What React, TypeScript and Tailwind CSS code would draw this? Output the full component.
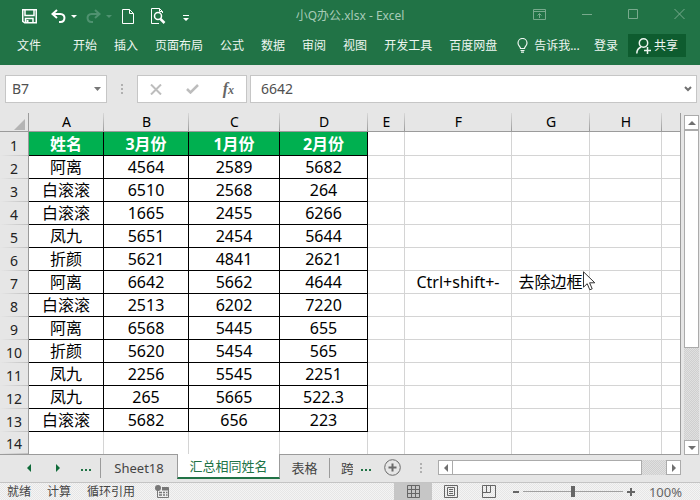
import React, { useState } from "react";

type Row = [string, string, string, string];

const rows: Row[] = [
  ["阿离", "4564", "2589", "5682"],
  ["白滚滚", "6510", "2568", "264"],
  ["白滚滚", "1665", "2455", "6266"],
  ["凤九", "5651", "2454", "5644"],
  ["折颜", "5621", "4841", "2621"],
  ["阿离", "6642", "5662", "4644"],
  ["白滚滚", "2513", "6202", "7220"],
  ["阿离", "6568", "5445", "655"],
  ["折颜", "5620", "5454", "565"],
  ["凤九", "2256", "5545", "2251"],
  ["凤九", "265", "5665", "522.3"],
  ["白滚滚", "5682", "656", "223"],
];

const columns = [
  { name: "A", width: "w-[75px]" },
  { name: "B", width: "w-[85px]" },
  { name: "C", width: "w-[91px]" },
  { name: "D", width: "w-[88px]" },
  { name: "E", width: "w-[37px]" },
  { name: "F", width: "w-[107px]" },
  { name: "G", width: "w-[78px]" },
  { name: "H", width: "w-[72px]" },
];

const ribbonTabs = ["开始", "插入", "页面布局", "公式", "数据", "审阅", "视图", "开发工具", "百度网盘"];

function TitleBar() {
  return (
    <div className="flex h-8 items-center">
      <div className="flex flex-1 items-center text-white">
        <button aria-label="保存" className="mr-[14px] ml-[22px]">
          <svg width="15" height="15" viewBox="0 0 15 15" fill="none" stroke="currentColor" strokeWidth="1.5">
            <path d="M.75.75h13.500v13H2.750l-2-1.500z" />
            <path d="M3 1v5.500h9V1" />
            <path d="M3.500 14V9.500h7.500V14" />
            <path d="M4.500 11h2v3h-2z" fill="currentColor" stroke="none" />
          </svg>
        </button>
        <button aria-label="撤消" className="mr-[5px]">
          <svg width="15" height="14" viewBox="0 0 15 14" fill="none" stroke="currentColor" strokeWidth="2">
            <path d="M6 1 1.500 5 6 9M2 5h7.500c5.500 0 5 8 0 8H8" />
          </svg>
        </button>
        <Caret />
        <button aria-label="恢复" className="mr-[5px] ml-[9px] text-[#4f9270]">
          <svg width="15" height="14" viewBox="0 0 15 14" fill="none" stroke="currentColor" strokeWidth="2">
            <path d="M9 1l4.500 4L9 9M13 5H5.500C0 5 .5 13 5.500 13H7" />
          </svg>
        </button>
        <span className="flex text-[#4f9270]"><Caret /></span>
        <button aria-label="新建" className="mr-[17px] ml-[10px]">
          <svg width="12" height="15" viewBox="0 0 12 15" fill="none" stroke="currentColor">
            <path d="M.5.5h7l4 4v10H.5z" />
            <path d="M7.500.5v4h4" />
          </svg>
        </button>
        <button aria-label="打印预览" className="mr-[17px]">
          <svg width="15" height="17" viewBox="0 0 15 17" fill="none" stroke="currentColor">
            <path d="M8 15.500H.5V.5h8l3 3V5M8.500.5v3h3" />
            <circle cx="7" cy="8" r="3.500" strokeWidth="1.500" />
            <path d="m9.500 11 4 4" strokeWidth="2.500" />
          </svg>
        </button>
        <button aria-label="自定义快速访问工具栏">
          <svg width="6" height="6" viewBox="0 0 6 6" fill="currentColor" className="mt-[3px]">
            <path d="M0 0h6v1H0zM0 3h6L3 6z" />
          </svg>
        </button>
      </div>
      <h1 className="text-xs leading-4 text-[#a7cbb7]">小Q办公.xlsx - Excel</h1>
      <div className="flex flex-1 items-center justify-end gap-9 pb-1 text-[#78aa8d]">
        <button aria-label="功能区显示选项">
          <svg width="13" height="11" viewBox="0 0 13 11" fill="none" stroke="currentColor">
            <path d="M.5.5h12v10H.5zM.5 2.500h12M6.500 9V4.500M4.500 6.500l2-2 2 2" />
          </svg>
        </button>
        <button aria-label="最小化">
          <svg width="10" height="10" viewBox="0 0 10 10" stroke="currentColor">
            <path d="M0 5.500h10" />
          </svg>
        </button>
        <button aria-label="最大化">
          <svg width="10" height="10" viewBox="0 0 10 10" fill="none" stroke="currentColor">
            <path d="M.5.5h9v9h-9z" />
          </svg>
        </button>
        <button aria-label="关闭" className="mr-[15px]">
          <svg width="11" height="10" viewBox="0 0 11 10" stroke="currentColor">
            <path d="M.5 0l10 10M10.500 0l-10 10" />
          </svg>
        </button>
      </div>
    </div>
  );
}

function Caret() {
  return (
    <svg width="6" height="3" viewBox="0 0 6 3" fill="currentColor">
      <path d="M0 0h6L3 3z" />
    </svg>
  );
}

function Ribbon() {
  return (
    <nav className="flex h-[33px] items-center pr-[14px] pb-[6px] pl-[17px] text-xs leading-4 whitespace-nowrap text-[#eef6f1]">
      <button className="mr-8">文件</button>
      <div className="flex gap-[17px]">
        {ribbonTabs.map((tab) => (
          <button key={tab}>{tab}</button>
        ))}
      </div>
      <button className="ml-5 flex items-center gap-[6px]">
        <svg width="11" height="15" viewBox="0 0 11 15" fill="none" stroke="currentColor" strokeWidth="1.200">
          <path d="M3.500 10.500c0-2-2.500-2.500-2.500-5.500a4.500 4.500 0 0 1 9 0c0 3-2.500 3.500-2.500 5.500zM3.500 12.500h4M4 14.200h3" />
        </svg>
        告诉我...
      </button>
      <button className="ml-auto">登录</button>
      <button className="ml-[10px] flex h-[23px] items-center gap-[3px] bg-[#0e5c2f] px-2">
        <svg width="15" height="16" viewBox="0 0 15 16" fill="none" stroke="currentColor" strokeWidth="1.500">
          <circle cx="7.500" cy="5" r="4.200" />
          <path d="M.8 15.500c0-4 2-5.500 4.200-6.500M11.500 9v7M8 12.500h7" />
        </svg>
        共享
      </button>
    </nav>
  );
}

function Dots() {
  return (
    <span className="flex flex-col gap-[2px]" aria-hidden="true">
      <i className="size-[2px] bg-[#b0b0b0]" />
      <i className="size-[2px] bg-[#b0b0b0]" />
      <i className="size-[2px] bg-[#b0b0b0]" />
    </span>
  );
}

function FormulaBar() {
  const [cell, setCell] = useState("B7");
  const [formula, setFormula] = useState("6642");
  return (
    <div className="flex items-center pt-[10px] pr-[3px] pb-[10px] pl-[5px] text-sm text-[#505050]">
      <div className="flex h-7 w-[102px] items-center border border-[#c6c6c6] bg-white pr-[5px] pl-[6px]">
        <input
          aria-label="名称框"
          value={cell}
          onChange={(e) => setCell(e.target.value)}
          className="w-full min-w-0 flex-1 outline-none"
        />
        <button aria-label="名称列表" className="text-[#777]">
          <svg width="7" height="4" viewBox="0 0 7 4" fill="currentColor">
            <path d="M0 0h7L3.500 4z" />
          </svg>
        </button>
      </div>
      <div className="flex w-[30px] justify-center"><Dots /></div>
      <div className="flex h-7 w-[110px] items-center justify-between border border-[#c6c6c6] bg-white pr-3 pl-3">
        <button aria-label="取消" className="text-[#bdbdbd]">
          <svg width="12" height="11" viewBox="0 0 12 11" stroke="currentColor" strokeWidth="2">
            <path d="M1 .5l10 10M11 .5l-10 10" />
          </svg>
        </button>
        <button aria-label="输入" className="text-[#bdbdbd]">
          <svg width="13" height="10" viewBox="0 0 13 10" fill="none" stroke="currentColor" strokeWidth="2.500">
            <path d="M1 5l3.500 3.500L12 1" />
          </svg>
        </button>
        <button aria-label="插入函数" className="font-['Liberation_Serif',serif] text-base leading-4 font-bold text-[#666] italic">
          f<span className="text-xs">x</span>
        </button>
      </div>
      <div className="ml-[3px] flex h-7 flex-1 items-center border border-[#c6c6c6] bg-white pr-1 pl-[10px]">
        <input
          aria-label="编辑栏"
          value={formula}
          onChange={(e) => setFormula(e.target.value)}
          className="w-full min-w-0 flex-1 outline-none"
        />
        <button aria-label="展开编辑栏" className="text-[#707070]">
          <svg width="8" height="6" viewBox="0 0 8 6" fill="none" stroke="currentColor" strokeWidth="2">
            <path d="M1 1l3 3 3-3" />
          </svg>
        </button>
      </div>
    </div>
  );
}

const rowHeader =
  "border-r border-[#9b9b9b] bg-[#e6e6e6] bg-[linear-gradient(to_right,#e6e6e6,#c0c0c0)] bg-[length:100%_1px] bg-bottom bg-no-repeat px-0 pb-0 text-sm leading-[20px] font-normal text-[#222]";
const plainCell = "border-r border-b border-[#d4d4d4] p-0 whitespace-nowrap";
const dataCell = "border-r border-b border-black p-0 whitespace-nowrap";
const headCell = "h-6 border-r border-b border-black bg-[#00b050] p-0 font-bold text-white";

function Grid() {
  return (
    <table className="w-full table-fixed border-separate border-spacing-0 border-r border-[#9b9b9b] bg-white text-center text-base leading-[22px] text-black">
      <colgroup>
        <col className="w-[29px]" />
        {columns.map((c) => (
          <col key={c.name} className={c.width} />
        ))}
        <col />
      </colgroup>
      <thead>
        <tr className="bg-[#e6e6e6] text-sm leading-[18px]">
          <td className="border-r border-b border-[#9b9b9b] p-0">
            <svg width="11" height="11" viewBox="0 0 11 11" className="mt-1 mr-[3px] ml-auto">
              <path d="M11 0v11H0z" fill="#b4b4b4" />
            </svg>
          </td>
          {columns.map((c) => (
            <th
              key={c.name}
              scope="col"
              className="border-b border-[#9b9b9b] bg-[linear-gradient(to_bottom,#d8d8d8,#9b9b9b)] bg-[length:1px_100%] bg-right bg-no-repeat p-0 font-normal"
            >
              {c.name}
            </th>
          ))}
          <th className="border-b border-[#9b9b9b] p-0" />
        </tr>
      </thead>
      <tbody>
        <tr>
          <th scope="row" className={`${rowHeader} pt-[3px]`}>1</th>
          {["姓名", "3月份", "1月份", "2月份"].map((label) => (
            <td key={label} className={headCell}>{label}</td>
          ))}
          <td className={plainCell} />
          <td className={plainCell} />
          <td className={plainCell} />
          <td className={plainCell} />
          <td className="border-b border-[#d4d4d4] p-0" />
        </tr>
        {rows.map((row, i) => (
          <tr key={i}>
            <th scope="row" className={`${rowHeader} pt-[3px]`}>{i + 2}</th>
            {row.map((value, j) => (
              <td key={j} className={dataCell}>{value}</td>
            ))}
            <td className={plainCell} />
            <td className={plainCell}>{i === 5 ? "Ctrl+shift+-" : ""}</td>
            <td className={plainCell}>
              {i === 5 && (
                <span className="relative">
                  去除边框
                  <svg width="13" height="20" viewBox="0 0 13 20" className="absolute top-0 left-full">
                    <path d="M.5.8v15.400l3.700-3.500 2.600 6.100 2.400-1-2.600-6h5.200z" fill="#fff" stroke="#333" />
                  </svg>
                </span>
              )}
            </td>
            <td className={plainCell} />
            <td className="border-b border-[#d4d4d4] p-0" />
          </tr>
        ))}
        <tr>
          <th scope="row" className={`${rowHeader} pt-[2px]`}>14</th>
          {columns.map((c) => (
            <td key={c.name} className="border-r border-[#d4d4d4] p-0" />
          ))}
          <td className="p-0" />
        </tr>
      </tbody>
    </table>
  );
}

const track =
  "bg-[#d9d9d9] bg-[repeating-conic-gradient(#cfcfcf_0_25%,#e0e0e0_0_50%)] bg-[length:2px_2px]";
const scrollButton =
  "flex size-[15px] shrink-0 items-center justify-center border border-[#ababab] bg-white text-[#707070]";

function VerticalScroll() {
  return (
    <div className="mt-[2px] mr-px -mb-px ml-[3px] flex w-[15px] shrink-0 flex-col">
      <button aria-label="向上滚动" className={scrollButton}>
        <svg width="8" height="4" viewBox="0 0 8 4" fill="currentColor"><path d="M4 0l4 4H0z" /></svg>
      </button>
      <div className="grow-[7] border border-[#ababab] bg-white" />
      <div className={`grow-[3] ${track}`} />
      <button aria-label="向下滚动" className={scrollButton}>
        <svg width="8" height="4" viewBox="0 0 8 4" fill="currentColor"><path d="M0 0h8L4 4z" /></svg>
      </button>
    </div>
  );
}

function HorizontalScroll() {
  return (
    <div className="flex flex-1">
      <button aria-label="向左滚动" className={scrollButton}>
        <svg width="4" height="8" viewBox="0 0 4 8" fill="currentColor"><path d="M4 0v8L0 4z" /></svg>
      </button>
      <div className="-ml-px grow-[8] border border-[#ababab] bg-white" />
      <div className={`grow ${track}`} />
      <button aria-label="向右滚动" className={scrollButton}>
        <svg width="4" height="8" viewBox="0 0 4 8" fill="currentColor"><path d="M0 0v8l4-4z" /></svg>
      </button>
    </div>
  );
}

function SheetTabs() {
  return (
    <div className="flex h-7 pr-[19px] text-[13px] leading-4 text-[#444]">
      <div className="flex items-center border-t border-[#9b9b9b] pb-[2px] pl-[27px]">
        <button aria-label="上一张工作表" className="mr-[25px] text-[#0e6b39]">
          <svg width="4" height="8" viewBox="0 0 4 8" fill="currentColor"><path d="M4 0v8L0 4z" /></svg>
        </button>
        <button aria-label="下一张工作表" className="mr-[21px] text-[#0e6b39]">
          <svg width="4" height="8" viewBox="0 0 4 8" fill="currentColor"><path d="M0 0v8l4-4z" /></svg>
        </button>
        <More />
        <button className="ml-[9px] h-5 w-[77px] border-l border-[#9b9b9b]">Sheet18</button>
      </div>
      <button className="h-[25px] w-[103px] border-x border-b-2 border-x-[#9b9b9b] border-b-[#217346] bg-white text-[#217346]">
        汇总相同姓名
      </button>
      <div className="flex flex-1 items-center border-t border-[#9b9b9b] pb-[2px]">
        <button className="h-5 w-[50px] border-r border-[#9b9b9b]">表格</button>
        <button className="ml-[11px] w-[12px] overflow-hidden whitespace-nowrap">跨</button>
        <span className="ml-2"><More /></span>
        <button aria-label="新工作表" className="ml-[13px] text-[#6a6a6a]">
          <svg width="17" height="17" viewBox="0 0 17 17" fill="none" stroke="currentColor">
            <circle cx="8.500" cy="8.500" r="7.800" />
            <path d="M8.500 4.500v8M4.500 8.500h8" strokeWidth="2" />
          </svg>
        </button>
        <span className="mr-4 ml-[19px]"><Dots /></span>
        <HorizontalScroll />
      </div>
    </div>
  );
}

function More() {
  return (
    <button aria-label="更多工作表" className="flex gap-[2px] pt-1">
      <i className="size-[2px] bg-[#217346]" />
      <i className="size-[2px] bg-[#217346]" />
      <i className="size-[2px] bg-[#217346]" />
    </button>
  );
}

function StatusBar() {
  const [zoom, setZoom] = useState(100);
  return (
    <footer className="flex h-[18px] items-center overflow-hidden border-t border-[#c4c4c4] bg-[#eee] bg-[repeating-conic-gradient(#e6e6e6_0_25%,#f4f4f4_0_50%)] bg-[length:2px_2px] pl-[7px] text-xs leading-4 text-[#444]">
      <span className="mr-4">就绪</span>
      <span className="mr-4">计算</span>
      <span className="mr-5">循环引用</span>
      <button aria-label="宏录制" className="text-[#777]">
        <svg width="14" height="13" viewBox="0 0 14 13" fill="none" stroke="currentColor">
          <path d="M2.500 5v7.500h11v-10H7" />
          <path d="M7 4h6.500" strokeWidth="3" />
          <path d="M4 7.500h3m1 0h2m1 0h1.500M4 10h3m1 0h2m1 0h1.500" strokeWidth="1.300" />
          <circle cx="3" cy="3" r="3" fill="currentColor" stroke="none" />
        </svg>
      </button>
      <div className="ml-auto flex items-center text-[#666]">
        <button aria-label="普通" className="flex h-[18px] w-[38px] items-center justify-center bg-[#c6c6c6]">
          <svg width="13" height="13" viewBox="0 0 13 13" fill="none" stroke="currentColor">
            <path d="M.5.5h12v12H.5zM4.500.5v12M8.500.5v12M.5 4.500h12M.5 8.500h12" />
          </svg>
        </button>
        <button aria-label="页面布局" className="flex h-[18px] w-[38px] items-center justify-center">
          <svg width="14" height="13" viewBox="0 0 14 13" fill="none" stroke="currentColor">
            <path d="M.5.5h13v12H.5zM3.500 2.500h7v8h-7zM5 4.500h4M5 6.500h4M5 8.500h4" />
          </svg>
        </button>
        <button aria-label="分页预览" className="flex h-[18px] w-[38px] items-center justify-center">
          <svg width="14" height="13" viewBox="0 0 14 13" fill="none" stroke="currentColor">
            <path d="M.5.5h13v12H.5zM.5 7.500h8v-7M4.500.5v7" />
          </svg>
        </button>
        <button aria-label="缩小" className="ml-[5px] flex">
          <svg width="6" height="8" viewBox="0 0 6 8" stroke="currentColor" strokeWidth="2"><path d="M0 4h6" /></svg>
        </button>
        <input
          type="range"
          aria-label="显示比例"
          min={0}
          max={200}
          value={zoom}
          onChange={(e) => setZoom(Number(e.target.value))}
          className="mx-1 h-3 w-[100px] appearance-none bg-[linear-gradient(#a0a0a0,#a0a0a0)] bg-[length:100%_1px] bg-center bg-no-repeat [&::-webkit-slider-thumb]:h-[11px] [&::-webkit-slider-thumb]:w-1 [&::-webkit-slider-thumb]:appearance-none [&::-webkit-slider-thumb]:bg-[#666]"
        />
        <button aria-label="放大" className="flex">
          <svg width="8" height="8" viewBox="0 0 8 8" stroke="currentColor" strokeWidth="2"><path d="M0 4h8M4 0v8" /></svg>
        </button>
        <span className="w-[65px] pr-[18px] text-right text-[13px]">{zoom}%</span>
      </div>
    </footer>
  );
}

export default function App() {
  return (
    <div className="flex min-h-screen flex-col overflow-hidden bg-[#e6e6e6] font-['Noto_Sans','Noto_Sans_CJK_SC',sans-serif]">
      <header className="bg-[#217346]">
        <TitleBar />
        <Ribbon />
      </header>
      <FormulaBar />
      <main className="flex">
        <div className="min-w-0 flex-1"><Grid /></div>
        <VerticalScroll />
      </main>
      <SheetTabs />
      <StatusBar />
    </div>
  );
}
